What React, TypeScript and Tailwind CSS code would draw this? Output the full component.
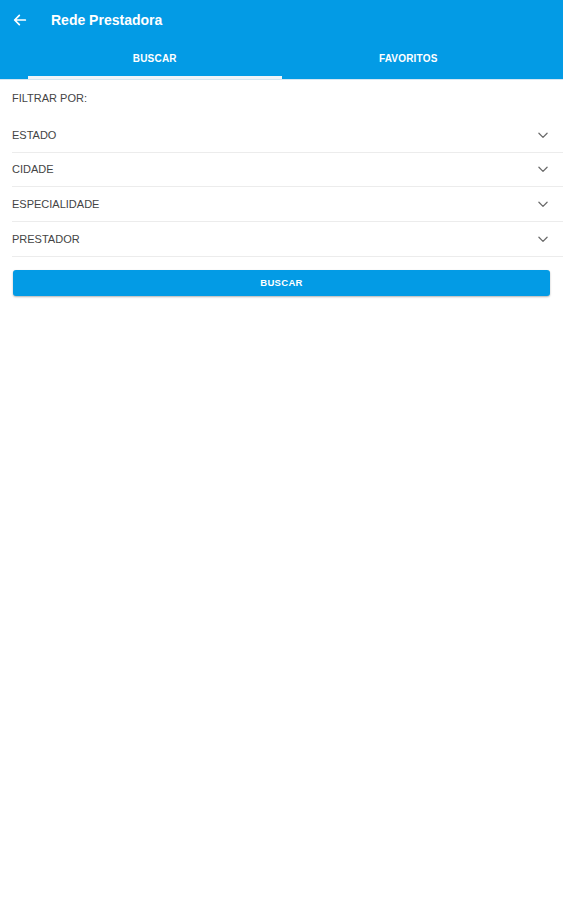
import React from "react";

const Chevron = () => (
  <svg width="14" height="14" viewBox="0 0 24 24" fill="none" stroke="#6b6b6b" strokeWidth="2.2" strokeLinecap="round" strokeLinejoin="round">
    <path d="M5 9l7 7 7-7" />
  </svg>
);

const rows = ["ESTADO", "CIDADE", "ESPECIALIDADE", "PRESTADOR"];

export default function App() {
  return (
    <div className="w-[563px] h-[900px] bg-white" style={{ fontFamily: "'Liberation Sans', Arial, sans-serif" }}>
      <div className="bg-[#039be5]">
        <div className="h-[40px] flex items-center pl-[12px]">
          <svg width="16" height="16" viewBox="0 0 24 24" fill="none" stroke="white" strokeWidth="2.6" strokeLinecap="round" strokeLinejoin="round">
            <path d="M20 12H5M11 5l-7 7 7 7" />
          </svg>
          <span className="ml-[23px] text-white font-bold text-[14px]">Rede Prestadora</span>
        </div>
        <div className="flex px-[28px] h-[39px]">
          <div className="flex-1 flex flex-col">
            <div className="flex-1 flex items-center justify-center text-white font-bold text-[10px] tracking-[0.2px]">BUSCAR</div>
            <div className="h-[3px] bg-[#f0f4f8]" />
          </div>
          <div className="flex-1 flex flex-col">
            <div className="flex-1 flex items-center justify-center text-white font-bold text-[10px] tracking-[0.2px]">FAVORITOS</div>
            <div className="h-[3px]" />
          </div>
        </div>
      </div>
      <div className="h-[1px] bg-[#d5e6f2]" />
      <div className="pl-[12px]">
        <div className="pt-[10px] pb-[12px] h-[38px] flex items-center text-[11px] text-[#444]">FILTRAR POR:</div>
        {rows.map((r) => (
          <div key={r} className="h-[34.67px] border-b border-[#ececec] flex items-center justify-between pr-[13px] text-[11px] text-[#444]">
            <span>{r}</span>
            <Chevron />
          </div>
        ))}
      </div>
      <div className="mx-[13px] mt-[13px] h-[26px] rounded-[3px] bg-[#039be5] shadow-[0_1px_2px_rgba(0,0,0,0.3)] flex items-center justify-center text-white font-bold text-[9.5px] tracking-[0.3px]">
        BUSCAR
      </div>
    </div>
  );
}
